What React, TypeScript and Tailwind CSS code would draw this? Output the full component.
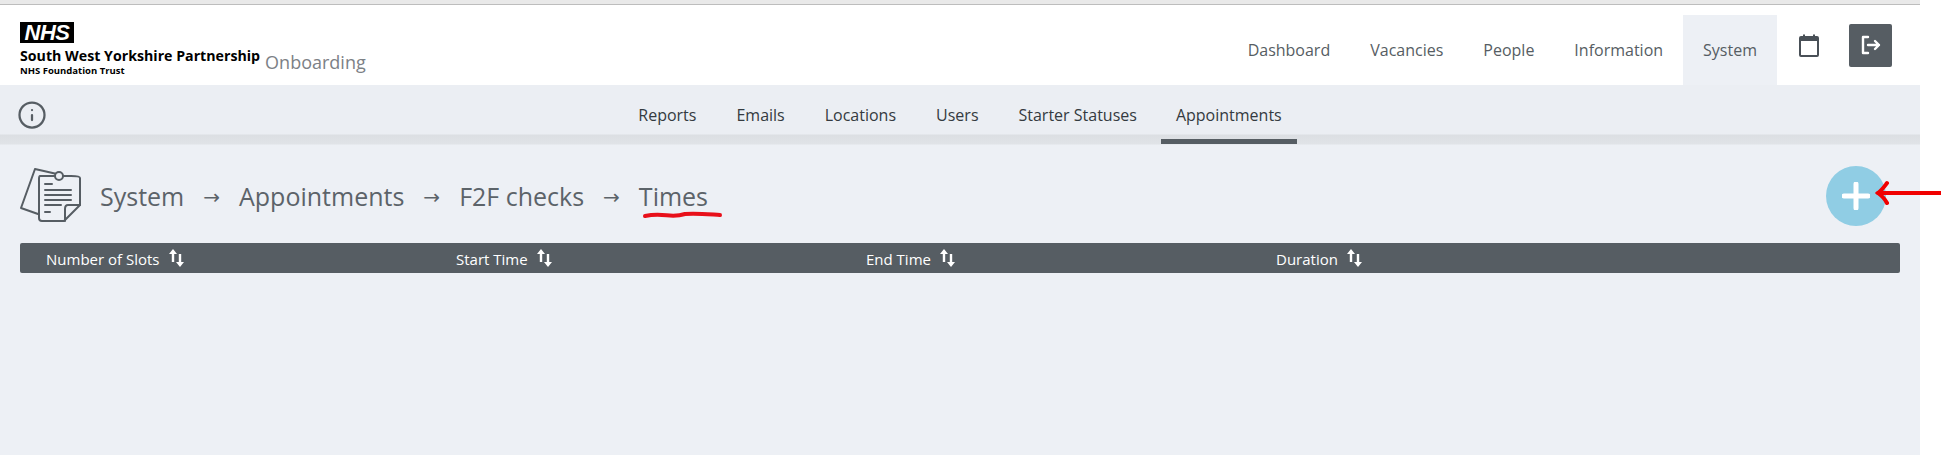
import { Info } from 'lucide-react';

const mainNav = ['Dashboard', 'Vacancies', 'People', 'Information'];
const subNav = ['Reports', 'Emails', 'Locations', 'Users', 'Starter Statuses'];
const crumbs = ['System', 'Appointments', 'F2F checks'];
const columns = ['Number of Slots', 'Start Time', 'End Time', 'Duration'];

function SortIcon() {
  return (
    <svg width="17" height="20" viewBox="0 0 17 20" className="ml-2 -mt-1" fill="white">
      <path d="M5 1 L9 6 H6.2 V14 H3.8 V6 H1 Z" />
      <path d="M12 19 L16 14 H13.2 V6 H10.8 V14 H8 Z" />
    </svg>
  );
}

function NotesIcon() {
  return (
    <svg width="62" height="56" viewBox="0 0 62 56" fill="none" stroke="#565d63" strokeWidth="2" strokeLinejoin="round" strokeLinecap="round">
      <path d="M37 6 L15 1 L1 40 L18 46" />
      <path d="M20 8 H51 Q60 8 60 10 V37 L44 53 H22 Q19 53 19 50 V11 Q19 8 20 8 Z" />
      <path d="M60 37 H48 Q45 37 45 41 V53" />
      <circle cx="39" cy="8" r="4" fill="#edf0f5" />
      <path d="M25 16 H32 M25 22 H51 M25 27 H51 M25 32 H51 M25 37 H41 M25 44 H30" />
    </svg>
  );
}

function LogoutIcon() {
  return (
    <svg width="22" height="22" viewBox="0 0 22 22" fill="none" stroke="white" strokeWidth="2.4" strokeLinecap="round" strokeLinejoin="round">
      <path d="M8 3 H3 V19 H8" />
      <path d="M8 11 H19 M15 7 L19 11 L15 15" />
    </svg>
  );
}

function CalendarIcon() {
  return (
    <svg width="20" height="23" viewBox="0 0 20 23" fill="none" className="mr-[30px]">
      <path d="M5 0.5 V3 M15 0.5 V3" stroke="#495057" strokeWidth="2" />
      <rect x="1" y="3" width="18" height="19" rx="1" stroke="#495057" strokeWidth="2" />
      <rect x="1" y="3" width="18" height="4" fill="#495057" />
    </svg>
  );
}

export default function App() {
  return (
    <div className="relative h-[455px] w-[1941px] overflow-hidden bg-white font-['Open_Sans',sans-serif]">
      <div className="flex h-[455px] w-[1920px] flex-col bg-[#edf0f5]">
        <div className="h-[5px] border-b border-[#bdbdbd] bg-[#e9e9e9]" />

        {/* top bar */}
        <header className="flex h-[80px] items-stretch justify-between bg-white pl-5 pr-7">
          <div className="flex">
            <div className="flex flex-col pt-[17px] text-black">
              <span className="flex h-[21px] w-[54px] items-center justify-center bg-black font-['Liberation_Sans',sans-serif] text-[22px] font-bold italic leading-none tracking-tight text-white">NHS</span>
              <span className="mt-[3px] text-[14.2px] leading-[20px] font-bold whitespace-nowrap">South West Yorkshire Partnership</span>
              <span className="text-[9.5px] leading-[10px] font-bold">NHS Foundation Trust</span>
            </div>
            <span className="ml-[5px] pt-[43px] text-[18px] leading-[28px] text-[#7c8186]">Onboarding</span>
          </div>
          <nav className="flex items-center text-[16px] text-[#565d63]">
            {mainNav.map((item) => (
              <a key={item} className="flex h-full items-center px-5 pt-[9px]">{item}</a>
            ))}
            <a className="mr-[22px] flex h-[70px] items-center self-end bg-[#edf0f5] px-5">System</a>
            <CalendarIcon />
            <button className="flex h-[43px] w-[43px] items-center justify-center rounded-[2px] bg-[#565d63]">
              <LogoutIcon />
            </button>
          </nav>
        </header>

        {/* second level nav */}
        <div className="relative flex h-[60px] justify-center bg-[linear-gradient(to_bottom,#ebeef3_0,#ebeef3_49px,#dcdfe3_50px,#e0e3e7_59px,#edf0f5_60px)] pr-[5px]">
          <Info className="absolute top-[15px] left-[17px] h-[30px] w-[30px] text-[#565d63]" strokeWidth={1.8} />
          <nav className="flex text-[16px] text-[#343a40]">
            {subNav.map((item) => (
              <a key={item} className="flex h-[59px] items-center px-5 pt-[1px]">{item}</a>
            ))}
            <a className="ml-1 flex h-[59px] items-center border-b-[5px] border-[#565d63] px-[15px] pt-[6px]">Appointments</a>
          </nav>
        </div>

        {/* breadcrumb */}
        <div className="flex h-[98px] items-center justify-between pr-[34px] pl-5 pt-[4px]">
          <div className="flex items-center text-[25px] text-[#5c6369]">
            <NotesIcon />
            <div className="ml-[18px] flex items-center pt-[2px]">
              {crumbs.map((crumb) => (
                <span key={crumb} className="flex items-center">
                  <span>{crumb}</span>
                  <span className="mx-[19px] font-['DejaVu_Sans',sans-serif] text-[20px]">→</span>
                </span>
              ))}
              <span>Times</span>
            </div>
          </div>
          <button className="flex h-[60px] w-[60px] items-center justify-center rounded-full bg-[#90cde4] text-white">
            <svg width="28" height="28" viewBox="0 0 28 28" stroke="white" strokeWidth="5" strokeLinecap="round">
              <path d="M14 2 V26 M2 14 H26" />
            </svg>
          </button>
        </div>

        {/* table header */}
        <div className="mx-5 flex h-[30px] items-center rounded-[2px] bg-[#565d63] pl-[26px] text-[15px] text-white">
          {columns.map((col) => (
            <div key={col} className="flex w-[410px] items-center pt-[3px]">
              <span>{col}</span>
              <SortIcon />
            </div>
          ))}
        </div>
      </div>

      {/* red annotations on the screenshot */}
      <svg className="absolute top-[205px] left-[640px]" width="85" height="20" fill="none" stroke="#e8101a" strokeWidth="4" strokeLinecap="round">
        <path d="M5 11 C25 7 30 14 45 9 C55 8 65 9 80 10" />
      </svg>
      <svg className="absolute top-[180px] left-[1875px]" width="66" height="30" fill="none" stroke="#f00000" strokeWidth="4" strokeLinecap="round">
        <path d="M66 13 H3" />
        <path d="M12 3 C9 7 7 10 3 13 C7 16 10 19 12 23" />
      </svg>
    </div>
  );
}
